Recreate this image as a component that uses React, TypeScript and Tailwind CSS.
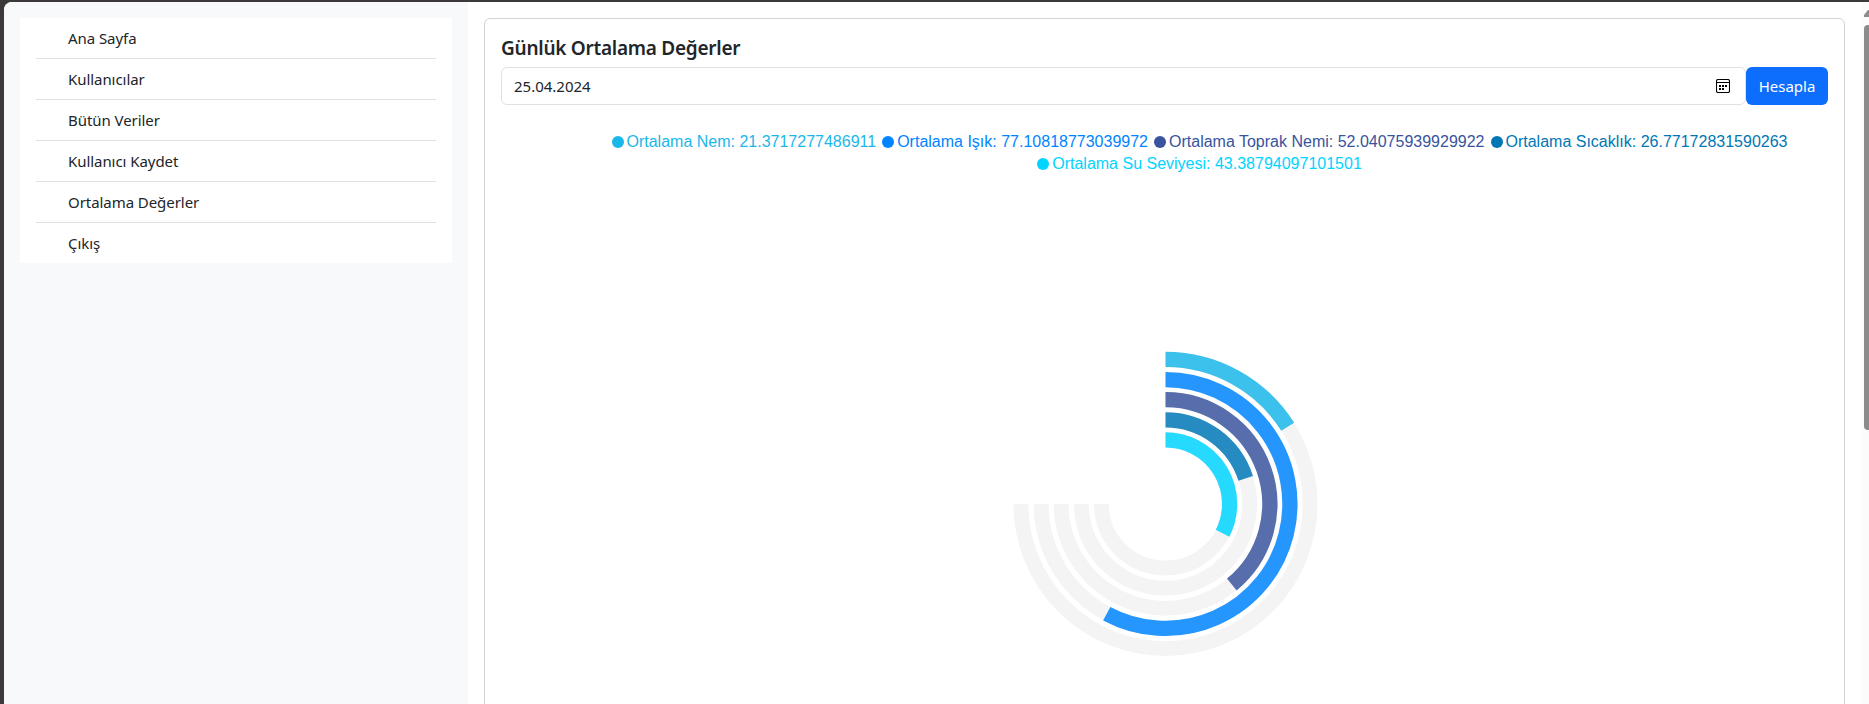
const menu = ['Ana Sayfa', 'Kullanıcılar', 'Bütün Veriler', 'Kullanıcı Kaydet', 'Ortalama Değerler', 'Çıkış'];

const series = [
  { label: 'Ortalama Nem', value: '21.3717277486911', color: '#1ab7ea', bar: '#3cc1ed', radius: 144.6 },
  { label: 'Ortalama Işık', value: '77.10818773039972', color: '#0084ff', bar: '#2696ff', radius: 124.4 },
  { label: 'Ortalama Toprak Nemi', value: '52.04075939929922', color: '#39539e', bar: '#576dac', radius: 104.3 },
  { label: 'Ortalama Sıcaklık', value: '26.77172831590263', color: '#0077b5', bar: '#268bc0', radius: 84.2 },
  { label: 'Ortalama Su Seviyesi', value: '43.38794097101501', color: '#00d4ff', bar: '#26daff', radius: 64.1 },
];

const CENTER_X = 160.5;
const CENTER_Y = 160;

function arc(r: number, degrees: number) {
  const a = (degrees * Math.PI) / 180;
  const x = CENTER_X + r * Math.sin(a);
  const y = CENTER_Y - r * Math.cos(a);
  return `M${CENTER_X} ${CENTER_Y - r} A${r} ${r} 0 ${degrees > 180 ? 1 : 0} 1 ${x} ${y}`;
}

function RadialChart() {
  return (
    <svg width="320" height="320" viewBox="0 0 320 320" fill="none">
      {series.map((s) => (
        <path key={s.label} d={arc(s.radius, 270)} stroke="#f4f4f4" strokeWidth="14.8" />
      ))}
      {series.map((s) => (
        <path key={s.label} d={arc(s.radius, Number(s.value) * 2.7)} stroke={s.bar} strokeWidth="15.3" />
      ))}
    </svg>
  );
}

function LegendItem({ index }: { index: number }) {
  const s = series[index];
  return (
    <div className="flex items-center gap-[3px] whitespace-nowrap" style={{ color: s.color }}>
      <span className="size-3 rounded-full bg-current" />
      <span>{s.label}: {s.value}</span>
    </div>
  );
}

function CalendarIcon() {
  return (
    <svg width="14" height="14" viewBox="0 0 14 14" fill="none" stroke="#000">
      <rect x="0.5" y="0.5" width="13" height="13" rx="1.6" strokeWidth="1.1" />
      <path d="M0.5 3.5H13.5" />
      <path d="M3 7H5M6 7H8M9 7H11M3 10H5M6 10H8" strokeWidth="1.8" />
    </svg>
  );
}

export default function App() {
  return (
    <div className="h-[704px] w-full overflow-hidden bg-[#3b3939] pl-1 pt-0.5 font-['Noto_Sans','Open_Sans',sans-serif] text-[15px] text-[#212529]">
      <div className="flex h-full overflow-hidden rounded-tl-lg bg-white">
        <aside className="w-[464px] shrink-0 bg-[#f8f9fb] p-4">
          <ul className="bg-white px-4">
            {menu.map((label) => (
              <li key={label} className="flex h-[41px] items-center border-b border-[#dee2e6] pl-8 tracking-[-0.06px] last:h-10 last:border-b-0">
                {label}
              </li>
            ))}
          </ul>
        </aside>
        <main className="min-w-0 flex-1 pl-4 pr-4 pt-4">
          <section className="h-[740px] rounded-md border border-[#d2d3d4] p-4">
            <h5 className="mb-2 h-6 whitespace-nowrap text-[19px] leading-[26px] font-semibold tracking-[-0.26px]">Günlük Ortalama Değerler</h5>
            <div className="flex h-[38px]">
              <div className="flex flex-1 items-center justify-between rounded-md border border-[#dee2e6] pl-3 pr-[15px]">
                <span>25.04.2024</span>
                <CalendarIcon />
              </div>
              <button className="w-[82px] rounded-md bg-[#0d6efd] text-white">Hesapla</button>
            </div>
            <div className="mt-[26px] flex flex-col items-center pl-[70px] font-['Liberation_Sans',sans-serif] text-base leading-[22px]">
              <div className="flex gap-[6px]">
                <LegendItem index={0} />
                <LegendItem index={1} />
                <LegendItem index={2} />
                <LegendItem index={3} />
              </div>
              <LegendItem index={4} />
            </div>
            <div className="mt-[169px] flex justify-center pl-px">
              <RadialChart />
            </div>
          </section>
        </main>
        <div className="flex w-2 flex-col items-end bg-[#fbfbfb] pt-2">
          <svg width="5" height="7" viewBox="0 0 5 7"><path d="M0 7V5L4 0H5V7Z" fill="#8b8b8b" /></svg>
          <div className="mt-2 h-[405px] w-[5px] rounded-l-[4px] bg-[#8b8b8b]" />
        </div>
      </div>
    </div>
  );
}
